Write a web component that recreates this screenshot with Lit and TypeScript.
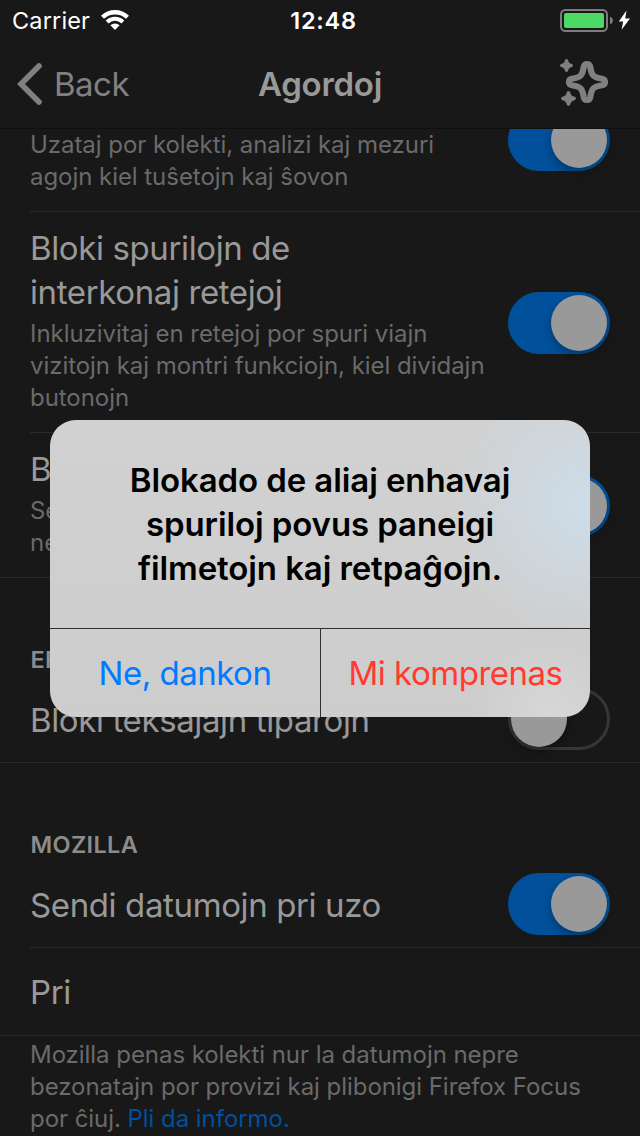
import { LitElement, html, css, nothing } from "lit";
import { customElement, property } from "lit/decorators.js";

@customElement("toggle-switch")
class ToggleSwitch extends LitElement {
  @property({ type: Boolean, reflect: true }) on = false;
  static styles = css`
    :host { flex: none; display: flex; box-sizing: border-box; width: 102px; height: 62px; border-radius: 31px; padding: 3px; border: 0 solid #33363b; }
    :host([on]) { background: #00509b; justify-content: flex-end; }
    :host(:not([on])) { border-width: 3px; padding: 0; }
    .knob { width: 56px; height: 56px; border-radius: 50%; background: #999; box-shadow: 0 5px 10px rgba(0, 0, 0, 0.28); }
  `;
  render() { return html`<div class="knob"></div>`; }
}

@customElement("status-bar")
class StatusBar extends LitElement {
  static styles = css`
    :host { display: grid; grid-template-columns: 1fr auto 1fr; align-items: center; height: 40px; color: #fff; font-size: 23.5px; line-height: 38px; }
    .left { display: flex; align-items: center; gap: 11px; padding-left: 12px; letter-spacing: 0.15px; }
    .left span, .time { padding-top: 2px; }
    .wifi { padding-bottom: 1px; }
    .time { font-weight: 600; letter-spacing: 0.75px; padding-left: 7px; }
    .right { display: flex; justify-content: flex-end; padding-right: 8px; }
    svg { display: block; }
  `;
  render() {
    return html`
      <div class="left"><span>Carrier</span>
        <svg class="wifi" width="28" height="20" viewBox="0 0 28 20" fill="none" stroke="#fff" stroke-width="4.3">
          <path d="M1.5 7.3A18 18 0 0 1 26.5 7.3"/><path d="M6.1 12A11.4 11.4 0 0 1 21.9 12" stroke-width="4"/>
          <path d="M14 20L9.4 15.3A6.6 6.6 0 0 1 18.6 15.3Z" fill="#fff" stroke="none"/>
        </svg></div>
      <div class="time">12:48</div>
      <div class="right">
        <svg width="72" height="24" viewBox="0 0 72 24">
          <rect x="1" y="2" width="46" height="21" rx="4.5" fill="none" stroke="#7c7c7c" stroke-width="2"/>
          <rect x="4" y="5" width="40" height="15" rx="2" fill="#4cd964"/>
          <path d="M50 8.5Q53 10 53 12.5T50 16.5Z" fill="#7c7c7c"/>
          <path d="M66.5 2.5L58.8 13.6H63.2L61.6 21.8L70 10.6H65.2Z" fill="#fff"/>
        </svg></div>`;
  }
}

@customElement("nav-bar")
class NavBar extends LitElement {
  static styles = css`
    :host { display: grid; grid-template-columns: 1fr auto 1fr; align-items: center; height: 88px; border-bottom: 1px solid #0f0f0f; line-height: 88px; }
    .back { display: flex; align-items: center; gap: 11px; padding-left: 17px; font-size: 33px; color: #808080; letter-spacing: -0.5px; }
    .title { font-size: 33px; font-weight: 600; color: #999; letter-spacing: -0.25px; }
    .action { display: flex; justify-content: flex-end; padding-right: 30px; }
    svg { display: block; }
  `;
  render() {
    return html`
      <div class="back">
        <svg width="26" height="44" viewBox="0 0 26 44" fill="none" stroke="#808080" stroke-width="5.6" stroke-linecap="round"><path d="M22 4L4 22L22 40" stroke-linejoin="miter"/></svg>
        <span>Back</span></div>
      <div class="title">Agordoj</div>
      <div class="action">
        <svg width="50" height="52" viewBox="0 0 50 52" fill="#808080">
          <path transform="translate(27 24)" fill="none" stroke="#808080" stroke-width="6.2" stroke-linejoin="round" d="M-3.3 -15C-2.6 -19 2.6 -19 3.3 -15C4.5 -6.5 6.5 -4.5 15 -3.3C19 -2.6 19 2.6 15 3.3C6.5 4.5 4.5 6.5 3.3 15C2.6 19 -2.6 19 -3.3 15C-4.5 6.5 -6.5 4.5 -15 3.3C-19 2.6 -19 -2.6 -15 -3.3C-6.5 -4.5 -4.5 -6.5 -3.3 -15Z"/>
          <path transform="translate(6.5 7.5)" d="M-1.5 -5.5Q0 -7.5 1.5 -5.5Q2 -2 5.5 -1.5Q7.5 0 5.5 1.5Q2 2 1.5 5.5Q0 7.5 -1.5 5.5Q-2 2 -5.5 1.5Q-7.5 0 -5.5 -1.5Q-2 -2 -1.5 -5.5Z"/>
          <path transform="translate(8.5 40.5) scale(1.14)" d="M-1.5 -5.5Q0 -7.5 1.5 -5.5Q2 -2 5.5 -1.5Q7.5 0 5.5 1.5Q2 2 1.5 5.5Q0 7.5 -1.5 5.5Q-2 2 -5.5 1.5Q-7.5 0 -5.5 -1.5Q-2 -2 -1.5 -5.5Z"/>
        </svg></div>`;
  }
}

interface Row { title?: string[]; sub?: string[]; toggle?: boolean; kind: string; }

const tracking: Row[] = [
  { sub: ["Uzataj por kolekti, analizi kaj mezuri", "agojn kiel tuŝetojn kaj ŝovon"], toggle: true, kind: "detail" },
  { title: ["Bloki spurilojn de", "interkonaj retejoj"], sub: ["Inkluzivitaj en retejoj por spuri viajn", "vizitojn kaj montri funkciojn, kiel dividajn", "butonojn"], toggle: true, kind: "detail" },
  { title: ["B"], sub: ["Se", "ne"], toggle: true, kind: "detail last" },
];

@customElement("app-root")
class AppRoot extends LitElement {
  static styles = css`
    :host { display: flex; flex-direction: column; position: relative; height: 1136px; overflow: hidden; background: #181818; font-family: Inter, "Liberation Sans", sans-serif; white-space: nowrap; }
    .list { flex: 1; min-height: 0; overflow: hidden; }
    .content { display: flex; flex-direction: column; margin-top: -62px; }
    .row { display: flex; box-sizing: border-box; align-items: center; justify-content: space-between; margin-left: 30px; padding-right: 30px; border-bottom: 1px solid #2a2a2a; }
    .last { margin-left: 0; padding-left: 30px; }
    .detail { min-height: 145px; }
    .simple { height: 89px; }
    .plain { height: 88px; }
    .copy { align-self: flex-end; padding: 14px 0 18px; }
    .simple .copy, .plain .copy { align-self: center; padding: 0; }
    .simple .copy { padding-top: 3px; }
    toggle-switch { margin-top: 2px; }
    .title { font-size: 33px; line-height: 44px; color: #999; letter-spacing: -0.38px; }
    .sub { font-size: 24px; line-height: 32px; color: #6a6a6a; letter-spacing: -0.05px; }
    .title + .sub { margin-top: 4px; }
    .section { box-sizing: border-box; height: 96px; padding: 66px 0 0 30.5px; font-size: 23.5px; line-height: 32px; font-weight: 600; color: #8c8c8c; letter-spacing: 0.35px; }
    .footer { padding: 3px 0 0 30px; }
    .link { color: #00509b; }
    .alert { position: absolute; left: 50px; top: 420px; width: 540px; height: 297px; display: flex; flex-direction: column; border-radius: 26px; overflow: hidden;
      background: radial-gradient(circle 135px at 535px 85px, #cddde9, #cddde900), radial-gradient(circle 80px at 500px 297px, #d7d7d7, #d7d7d700), linear-gradient(#d1d1d1, #cdcdcd); }
    .message { box-sizing: border-box; height: 208px; padding-top: 38px; text-align: center; font-size: 33px; line-height: 44px; font-weight: 600; color: #000; letter-spacing: -0.1px; }
    .actions { flex: 1; display: grid; grid-template-columns: 270px 1fr; border-top: 1px solid #302e32; }
    .button { text-align: center; font-size: 33px; line-height: 88px; color: #007aff; letter-spacing: -0.5px; }
    .danger { color: #ff3b30; border-left: 1px solid #302e32; }
  `;

  row(r: Row) {
    return html`<div class="row ${r.kind}">
      <div class="copy">
        ${r.title ? html`<div class="title">${r.title.map((t) => html`<div>${t}</div>`)}</div>` : nothing}
        ${r.sub ? html`<div class="sub">${r.sub.map((t) => html`<div>${t}</div>`)}</div>` : nothing}
      </div>
      ${r.toggle === undefined ? nothing : html`<toggle-switch ?on=${r.toggle}></toggle-switch>`}
    </div>`;
  }

  render() {
    return html`
      <status-bar></status-bar>
      <nav-bar></nav-bar>
      <div class="list"><div class="content">
        ${tracking.map((r) => this.row(r))}
        <div class="section">EF</div>
        ${this.row({ title: ["Bloki teksaĵajn tiparojn"], toggle: false, kind: "simple last" })}
        <div class="section">MOZILLA</div>
        ${this.row({ title: ["Sendi datumojn pri uzo"], toggle: true, kind: "simple" })}
        ${this.row({ title: ["Pri"], kind: "plain last" })}
        <div class="sub footer">
          <div>Mozilla penas kolekti nur la datumojn nepre</div>
          <div>bezonatajn por provizi kaj plibonigi Firefox Focus</div>
          <div>por ĉiuj. <span class="link">Pli da informo.</span></div>
        </div>
      </div></div>
      <div class="alert">
        <div class="message"><div>Blokado de aliaj enhavaj</div><div>spuriloj povus paneigi</div><div>filmetojn kaj retpaĝojn.</div></div>
        <div class="actions"><div class="button">Ne, dankon</div><div class="button danger">Mi komprenas</div></div>
      </div>`;
  }
}
